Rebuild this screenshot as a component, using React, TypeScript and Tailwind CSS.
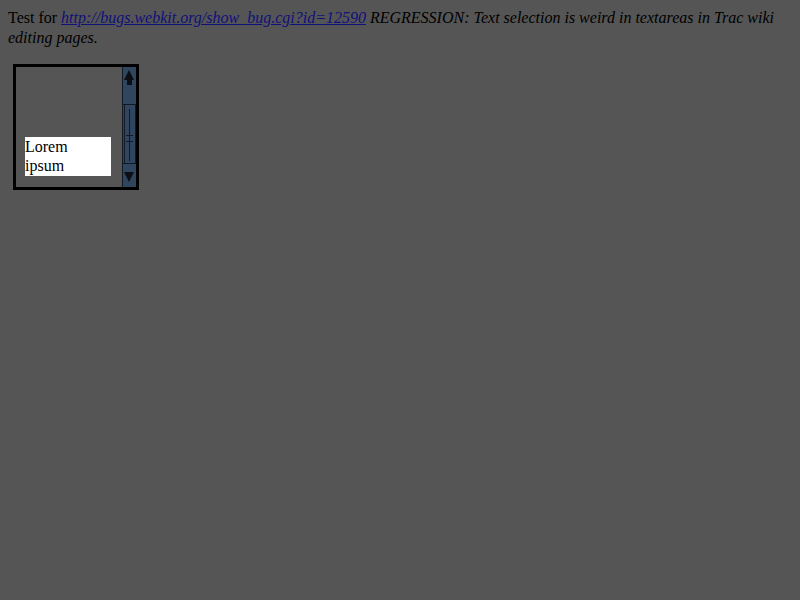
import React from "react";

// ScrollbarArt: the old-style textarea scrollbar, drawn
function ScrollbarArt() {
  return (
    <svg width="14" height="120" viewBox="0 0 14 120" className="block shrink-0">
      <rect x="0" y="0" width="14" height="120" fill="#2f465e" />
      <rect x="0" y="0" width="1" height="120" fill="#111a24" />
      {/* up arrow */}
      <polygon points="7,3 2,13 12,13" fill="#0b0f14" />
      <rect x="5" y="13" width="5" height="5" fill="#0b0f14" />
      {/* track frame */}
      <rect x="0" y="37" width="14" height="1" fill="#111a24" />
      <rect x="2" y="38" width="1" height="58" fill="#111a24" />
      <rect x="13" y="38" width="1" height="58" fill="#111a24" />
      <rect x="0" y="96" width="14" height="1" fill="#111a24" />
      <rect x="7" y="42" width="1" height="52" fill="#111a24" />
      <rect x="4" y="68" width="7" height="1" fill="#111a24" />
      <rect x="4" y="74" width="7" height="1" fill="#111a24" />
      {/* down arrow */}
      <polygon points="2,105 12,105 7,115" fill="#0b0f14" />
    </svg>
  );
}

export default function App() {
  return (
    <main
      className="min-h-[600px] w-[800px] bg-[#555555] p-2 text-[16px] text-black"
      style={{ fontFamily: '"Liberation Serif", "Times New Roman", serif' }}
    >
      <p className="leading-[20px]">
        Test for{" "}
        <i>
          <a href="#" className="text-[#10107a] underline">
            http://bugs.webkit.org/show_bug.cgi?id=12590
          </a>{" "}
          REGRESSION: Text selection is weird in textareas in Trac wiki editing pages.
        </i>
      </p>

      <div className="mt-[16px] ml-[5px] flex h-[126px] w-[126px] border-[3px] border-black">
        <div className="flex flex-1 flex-col justify-end pb-[11px] pl-[9px] pr-[11px]">
          <div className="h-[39px] bg-white leading-[19px]">
            Lorem
            <br />
            ipsum
          </div>
        </div>
        <ScrollbarArt />
      </div>
    </main>
  );
}
